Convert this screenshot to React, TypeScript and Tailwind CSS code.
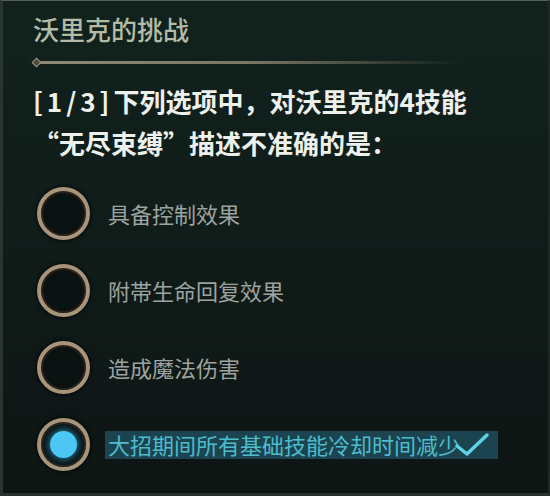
const options = [
  "具备控制效果",
  "附帯生命回复效果",
  "造成魔法伤害",
  "大招期间所有基础技能冷却时间减少",
];

const selected = 3;

function Radio({ on }: { on: boolean }) {
  return (
    <div className="flex h-[53px] w-[53px] shrink-0 items-center justify-center rounded-full border-[4px] border-[#a6957a] bg-[#0a1111] shadow-[inset_0_0_0_2px_#2a2018,0_0_4px_#000]">
      {on ? (
        <div className="h-[27px] w-[27px] rounded-full bg-[#4cc6f2] shadow-[0_0_8px_#2fa8e0]" />
      ) : null}
    </div>
  );
}

export default function App() {
  return (
    <div className="h-[496px] w-[550px] overflow-hidden border-t border-l-[3px] border-r-2 border-b-[3px] border-t-[#56605a] border-l-[#2a3430] border-r-[#1e2824] border-b-[#2a302e] bg-gradient-to-b from-[#11221d] via-[#101c19] to-[#0e1514] pl-[30px] pt-[11px] font-['Noto_Sans_CJK_SC',sans-serif]">
      <div className="text-[26px] leading-[34px] font-medium text-[#b3baa5]">
        沃里克的挑战
      </div>

      <div className="mt-[13px] flex items-center">
        <div className="h-[7px] w-[7px] rotate-45 border border-[#9a9580] bg-[#4a4a3c]" />
        <div className="h-[3px] w-[420px] bg-gradient-to-r from-[#8d8a74] via-[#7a7866] to-transparent" />
      </div>

      <div className="mt-[14px] text-[26px] leading-[42px] font-bold text-[#eef0ec]">
        <div>
          <span className="tracking-[4px]">[1/3]</span>下列选项中，对沃里克的4技能
        </div>
        <div>“无尽束缚”描述不准确的是：</div>
      </div>

      <div className="mt-[23px] ml-1 flex flex-col gap-[24px]">
        {options.map((text, i) => (
          <div key={text} className="flex items-center gap-[15px]">
            <Radio on={i === selected} />
            {i === selected ? (
              <div className="relative flex h-[28px] w-[393px] items-center bg-[#1c4450] pl-[3px] text-[22px] text-[#4dbccb]">
                大招期间所有基础技能冷却时间减少
                <svg
                  className="absolute right-[8px] top-[1px]"
                  width="36"
                  height="26"
                  viewBox="0 0 36 26"
                  fill="none"
                >
                  <path
                    d="M3 14 L13 22 L33 3"
                    stroke="#5fd2e6"
                    strokeWidth="3.5"
                    strokeLinecap="round"
                    strokeLinejoin="round"
                  />
                </svg>
              </div>
            ) : (
              <div className="pl-[3px] text-[22px] text-[#9ea39f]">{text}</div>
            )}
          </div>
        ))}
      </div>
    </div>
  );
}
